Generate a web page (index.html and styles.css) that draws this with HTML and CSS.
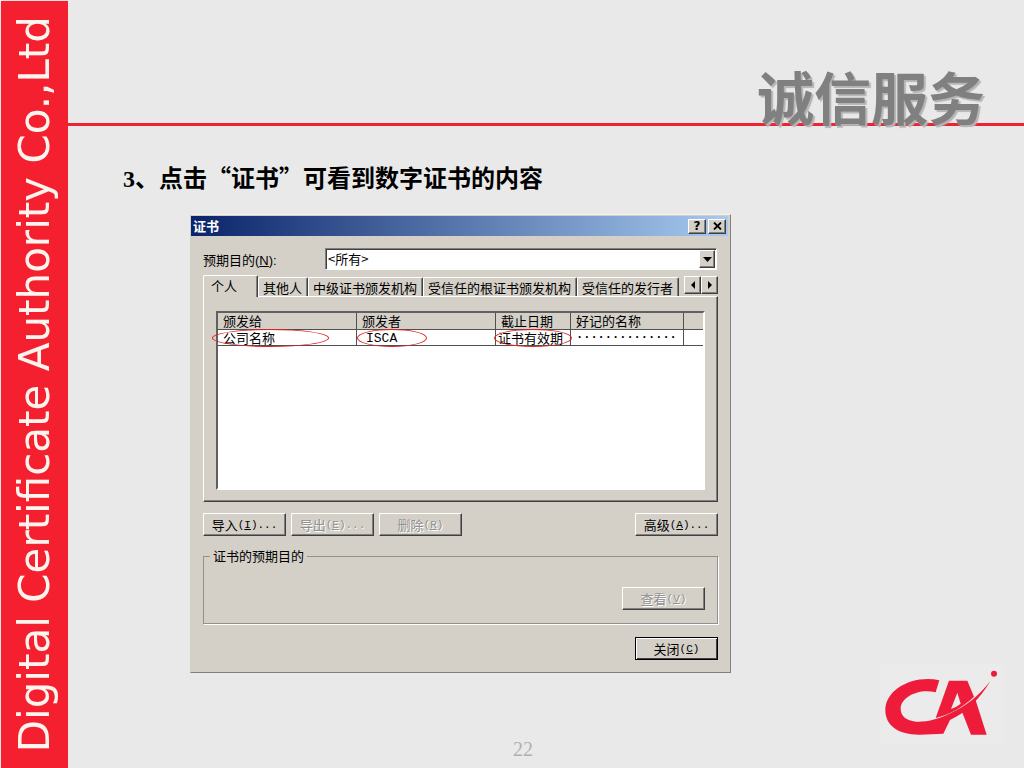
FILE: index.html
```html
<!DOCTYPE html>
<html lang="zh-CN">
<head>
    <meta charset="UTF-8">
    <meta name="viewport" content="width=device-width, initial-scale=1.0">
    <title>诚信服务</title>
    <link rel="stylesheet" href="styles.css">
</head>
<body>
    <aside class="brand"><span class="brand-text">Digital Certificate Authority Co.,Ltd</span></aside>

    <main>
        <header>
            <h1>诚信服务</h1>
        </header>

        <h2><span class="num">3</span>、点击“证书”可看到数字证书的内容</h2>

        <div class="content">
            <section class="dialog">
                <div class="titlebar">
                    <span class="title">证书</span>
                    <button class="cap" aria-label="帮助">?</button>
                    <button class="cap" aria-label="关闭">
                        <svg width="9" height="8" viewBox="0 0 9 8"><path d="M1 0.5L8 7.5M8 0.5L1 7.5" stroke="#000" stroke-width="1.8"/></svg>
                    </button>
                </div>

                <div class="body">
                    <div class="purpose">
                        <label for="purpose">预期目的(<u>N</u>):</label>
                        <div class="combo">
                            <select id="purpose"><option>&lt;所有&gt;</option></select>
                            <span class="arrow"><svg width="9" height="5" viewBox="0 0 9 5"><path d="M0 0H9L4.5 5Z"/></svg></span>
                        </div>
                    </div>

                    <div class="tabs">
                        <button class="tab active">个人</button>
                        <button class="tab">其他人</button>
                        <button class="tab">中级证书颁发机构</button>
                        <button class="tab">受信任的根证书颁发机构</button>
                        <button class="tab">受信任的发行者</button>
                        <div class="scroll">
                            <button aria-label="向左"><svg width="4" height="8" viewBox="0 0 4 8"><path d="M4 0V8L0 4Z"/></svg></button>
                            <button aria-label="向右"><svg width="4" height="8" viewBox="0 0 4 8"><path d="M0 0V8L4 4Z"/></svg></button>
                        </div>
                    </div>

                    <div class="panel">
                        <div class="list">
                            <table>
                                <colgroup>
                                    <col class="c-to"><col class="c-by"><col class="c-date"><col class="c-name"><col>
                                </colgroup>
                                <thead>
                                    <tr><th>颁发给</th><th>颁发者</th><th>截止日期</th><th>好记的名称</th><th></th></tr>
                                </thead>
                                <tbody>
                                    <tr>
                                        <td>公司名称<span class="mark mark-to"></span></td>
                                        <td><span class="mono">ISCA</span><span class="mark mark-by"></span></td>
                                        <td class="date">证书有效期<span class="mark mark-date"></span></td>
                                        <td class="dots">··············</td>
                                        <td></td>
                                    </tr>
                                </tbody>
                            </table>
                        </div>
                    </div>

                    <div class="actions">
                        <button class="btn">导入<span class="key">(<u>I</u>)...</span></button>
                        <button class="btn" disabled>导出<span class="key">(<u>E</u>)...</span></button>
                        <button class="btn" disabled>删除<span class="key">(<u>R</u>)</span></button>
                        <button class="btn last">高级<span class="key">(<u>A</u>)...</span></button>
                    </div>

                    <fieldset>
                        <legend>证书的预期目的</legend>
                        <button class="btn" disabled>查看<span class="key">(<u>V</u>)</span></button>
                    </fieldset>

                    <div class="close">
                        <button class="btn default">关闭<span class="key">(<u>C</u>)</span></button>
                    </div>
                </div>
            </section>

            <svg class="logo" viewBox="30 12 372 237" role="img" aria-label="CA">
                <g fill="#ee1c3a">
                    <path d="M208 61C130 44 46 88 46 150C46 200 90 225 150 224L220 221L240 180C290 158 330 115 361 64C325 108 290 138 235 163C200 180 165 187 138 185C105 181 92 165 92 146C92 112 145 84 197 97Z"/>
                    <path fill-rule="evenodd" d="M237 62H292L312 110C280 140 240 164 197 174ZM262 98L243 147C254 143 264 137 272 131Z"/>
                    <path d="M316 118L350 224H303L276 155C290 146 304 133 316 118Z"/>
                    <circle cx="372" cy="41" r="9"/>
                </g>
            </svg>

            <footer>22</footer>
        </div>
    </main>
</body>
</html>
```
FILE: styles.css
```css
* {
    box-sizing: border-box;
}

body {
    margin: 0;
    min-height: 100vh;
    display: flex;
    background-color: #e9e9e9;
    color: #000;
    font-family: "Noto Sans CJK SC", sans-serif;
}

button {
    padding: 0;
    color: #000;
    font-family: inherit;
    font-size: 13px;
    line-height: 16px;
}

/* red strip on the left */
.brand {
    flex: none;
    width: 68px;
    border: 1px solid #f5e4e6;
    border-width: 1px 0 0 1px;
    background-color: #f5202f;
    color: #fff5ee;
    display: flex;
    align-items: center;
    justify-content: center;
}

.brand-text {
    writing-mode: vertical-rl;
    transform: rotate(180deg);
    font-family: "DejaVu Sans", sans-serif;
    font-size: 42px;
    line-height: 48px;
    white-space: nowrap;
}

main {
    flex: 1;
    min-width: 0;
    display: flex;
    flex-direction: column;
}

header {
    display: flex;
    justify-content: flex-end;
    padding: 67px 39px 0 0;
    border-bottom: 3px solid #ee2233;
}

h1 {
    margin: 0;
    color: #808080;
    font-size: 57px;
    line-height: 56px;
    font-weight: bold;
    text-shadow: 2px 2px 1px #b4b4b4;
}

h2 {
    margin: 35px 0 19px 55px;
    font-size: 24px;
    line-height: 32px;
    font-weight: bold;
}

.num {
    font-family: "Liberation Serif", serif;
}

.content {
    flex: 1;
    display: grid;
    grid-template-columns: 1fr auto;
    grid-template-rows: auto 1fr;
    padding: 0 20px 8px 122px;
}

/* dialog window */
.dialog {
    width: 100%;
    max-width: 541px;
    background-color: #d4d0c8;
    border: 1px solid;
    border-color: #f4f2ee #808080 #808080 #d4d0c8;
    font-size: 13px;
    line-height: 16px;
}

.titlebar {
    display: flex;
    align-items: center;
    gap: 2px;
    height: 20px;
    margin: 1px 2px 0 0;
    padding: 0 2px;
    background: linear-gradient(to right, #0a246a, #a6caf0);
    color: #fff;
    font-weight: bold;
}

.title {
    flex: 1;
}

.cap,
.btn,
.arrow,
.scroll button {
    display: flex;
    align-items: center;
    justify-content: center;
    background-color: #d4d0c8;
    border: 1px solid;
    border-color: #fff #404040 #404040 #fff;
    box-shadow: inset -1px -1px #808080;
}

.cap {
    width: 18px;
    height: 15px;
    font-family: "DejaVu Sans", sans-serif;
    font-size: 12px;
    font-weight: bold;
}

.body {
    padding: 12px;
}

.purpose {
    display: flex;
    align-items: center;
}

.purpose label {
    width: 122px;
    padding-top: 4px;
    font-family: "Liberation Sans", "Noto Sans CJK SC", sans-serif;
}

.combo {
    position: relative;
    flex: 1;
    margin-right: 1px;
}

.combo select {
    display: block;
    width: 100%;
    height: 22px;
    padding: 0 2px 3px;
    appearance: none;
    border: 1px solid;
    border-color: #808080 #fff #fff #808080;
    border-radius: 0;
    box-shadow: inset 1px 1px #404040;
    background-color: #fff;
    color: #000;
    font-family: "Noto Sans CJK SC", sans-serif;
    font-size: 13px;
}

.arrow {
    position: absolute;
    top: 2px;
    right: 2px;
    width: 16px;
    height: 18px;
    pointer-events: none;
}

.tabs {
    display: flex;
    align-items: flex-end;
    margin-top: 5px;
}

.tab {
    height: 19px;
    padding: 0 4px;
    background-color: #d4d0c8;
    border: 1px solid;
    border-color: #fff #404040 transparent #fff;
    border-radius: 2px 2px 0 0;
    border-bottom: 0;
    box-shadow: inset -1px 0 #808080;
    white-space: nowrap;
}

.tab + .tab {
    padding: 1px 5px 0 4px;
}

.tab.active {
    position: relative;
    width: 55px;
    height: 22px;
    margin-bottom: -1px;
    padding: 0 13px 2px 0;
}

.scroll {
    display: flex;
    margin: 0 0 2px auto;
}

.scroll button {
    width: 17px;
    height: 18px;
}

.panel {
    padding: 14px 12px 11px;
    border: 1px solid;
    border-color: #fff #404040 #404040 #fff;
    box-shadow: inset -1px -1px #808080;
}

.list {
    height: 179px;
    background-color: #fff;
    border: 2px solid;
    border-color: #606060 #fff #fff #606060;
}

table {
    width: 100%;
    table-layout: fixed;
    border-collapse: separate;
    border-spacing: 0;
}

.c-to,
.c-by {
    width: 139px;
}

.c-date {
    width: 75px;
}

.c-name {
    width: 113px;
}

th,
td {
    position: relative;
    height: 16px;
    padding: 0 5px;
    border-right: 1px solid #505050;
    border-bottom: 1px solid #505050;
    font-weight: normal;
    line-height: 14px;
    text-align: left;
    white-space: nowrap;
}

th {
    height: 17px;
    background-color: #d4d0c8;
}

th:last-child,
td:last-child {
    border-right: 0;
}

td.date {
    padding: 0 2px;
}

.mono {
    padding-left: 4px;
    font-family: "Liberation Mono", monospace;
    line-height: 12px;
}

.dots {
    font-family: "Liberation Mono", monospace;
    font-size: 12px;
    font-weight: bold;
}

/* hand-drawn rings over the cells */
.mark {
    position: absolute;
    top: -1px;
    height: 18px;
    border: 1px solid #e02020;
    border-radius: 50%;
}

.mark-to {
    left: -6px;
    width: 117px;
}

.mark-by {
    left: 0;
    width: 70px;
}

.mark-date {
    left: -2px;
    width: 78px;
}

.actions {
    display: flex;
    gap: 5px;
    margin-top: 11px;
}

.btn {
    width: 83px;
    height: 23px;
}

.btn:disabled {
    color: #909090;
    text-shadow: 1px 1px #fff;
}

.btn.last {
    margin-left: auto;
}

.btn.default {
    border-color: #000;
    box-shadow: inset 1px 1px #fff, inset -1px -1px #404040;
}

.key {
    font-family: "Liberation Mono", monospace;
    font-size: 11px;
}

fieldset {
    display: flex;
    justify-content: flex-end;
    min-width: 0;
    margin: 12px 0 0;
    padding: 23px 12px 13px 6px;
    border: 1px solid #909090;
    box-shadow: 1px 1px #fff;
}

legend {
    padding: 0 3px;
}

.close {
    display: flex;
    justify-content: flex-end;
    margin-top: 13px;
}

.logo {
    grid-column: 2;
    grid-row: 1 / 3;
    align-self: end;
    width: 124px;
    height: 79px;
    margin-bottom: 17px;
    background-color: #ebebeb;
}

footer {
    grid-column: 1;
    grid-row: 2;
    align-self: end;
    padding-left: 323px;
    color: #b0b0b0;
    font-family: "Liberation Serif", serif;
    font-size: 20px;
    line-height: 22px;
}
```
